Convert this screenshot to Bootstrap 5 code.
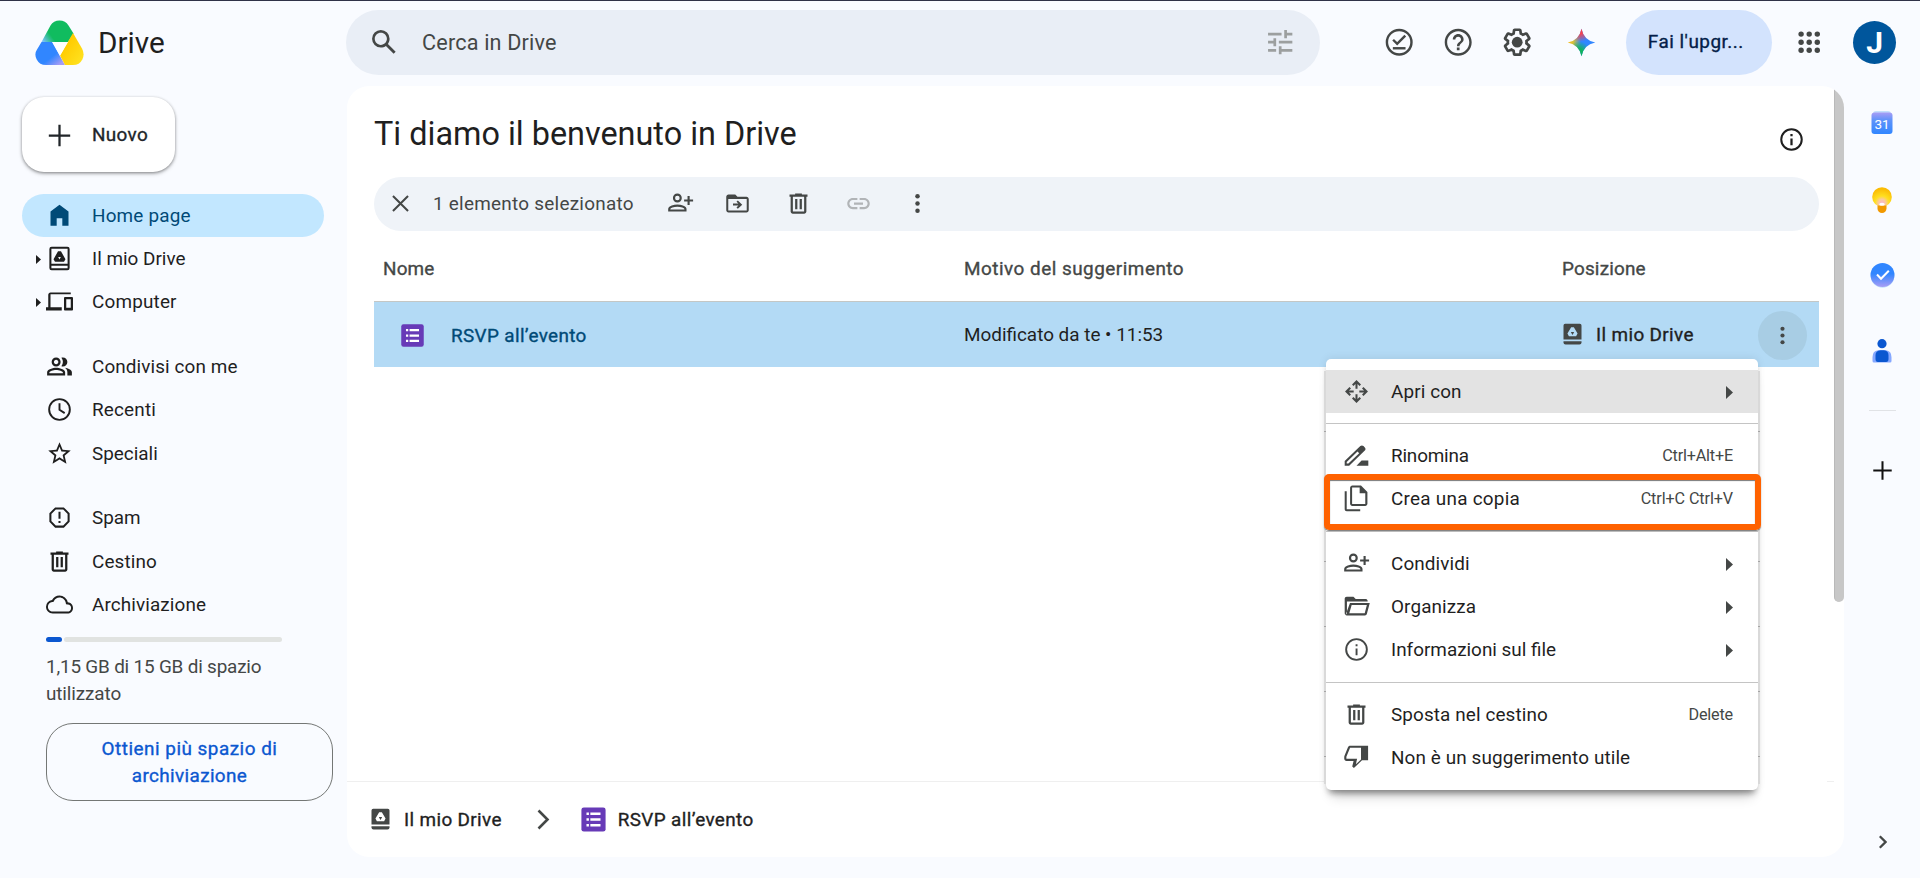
<!DOCTYPE html>
<html lang="it">
<head>
<meta charset="utf-8">
<meta name="viewport" content="width=device-width, initial-scale=1">
<title>Home page - Google Drive</title>
<link href="https://cdn.jsdelivr.net/npm/bootstrap@5.3.0/dist/css/bootstrap.min.css" rel="stylesheet">
<style>
  body { font-family: Roboto, "Liberation Sans", sans-serif; font-size: 18.9px; line-height: 27px; color: #1f1f1f; background: #f9fbff; height: 878px; overflow: hidden; }
  svg { display: block; flex: none; fill: currentColor; }
  .ic { width: 27px; height: 27px; }
  .ic-lg { width: 32.4px; height: 32.4px; }
  .fw-mid { -webkit-text-stroke: .35px currentColor; }
  .tone { color: #444746; }
  .txt { white-space: nowrap; }
  .ls-n2 { letter-spacing: -.18px; } .ls-n1 { letter-spacing: -.11px; }
  .ls-1 { letter-spacing: .11px; } .ls-2 { letter-spacing: .18px; } .ls-3 { letter-spacing: .26px; }
  .ls-4 { letter-spacing: .36px; } .ls-5 { letter-spacing: .5px; }

  .top-bar { height: 86px; border-top: 1px solid #2f3247; padding: 0 24px 2px 0; }
  .brand { width: 346px; padding-left: 35px; gap: 14px; }
  .brand-name { font-size: 29.7px; line-height: 36px; }
  .search-box { width: 975px; height: 65px; background: #e9eef6; padding: 0 23px 0 22px; margin-right: 63px; }
  .search-box .txt { font-size: 21.6px; margin-left: 22px; }
  .search-box .tune { color: #9c9f9f; }
  .top-icons { gap: 27px; }
  .top-icons .spark { margin-left: 4px; }
  .upgrade { width: 146px; height: 65px; background: #d3e3fd; color: #041e49; margin: 0 21px 0 28px; padding: 0 0 0 22px; font-size: 18.9px; }
  .avatar-dot { width: 43px; height: 43px; background: #00569c; color: #fff; font-size: 30px; font-weight: 700; margin-left: 28px; }

  .side { width: 347px; padding: 11px 14px 0 22px; }
  .new-btn { width: 153px; height: 75px; border-radius: 22px; background: #fff; padding: 1px 0 0 24px; gap: 19px; font-size: 18.9px; box-shadow: 0 1px 3px rgba(0,0,0,.35), 0 2px 4px rgba(0,0,0,.18); }
  .side-nav { margin-top: 22px; }
  .side-link { height: 43.2px; width: 302px; padding-left: 24px; gap: 19px; color: #1f1f1f; position: relative; text-decoration: none; }
  .side-link.on { background: #c2e7ff; color: #004a77; }
  .side-link .twist { position: absolute; left: 14px; top: 17.5px; width: 5px; height: 9px; }
  .gap-row { margin-top: 21.6px; }
  .meter { width: 236px; height: 5px; margin: 11px 0 0 24px; gap: 2px; }
  .meter div { border-radius: 3px; background: #e1e3e1; }
  .meter .used { background: #0b57d0; }
  .quota { margin: 11px 0 0 24px; color: #444746; }
  .more-btn { width: 287px; height: 78px; margin: 16px 0 0 24px; border: 1px solid #747775; border-radius: 27px; color: #0b57d0; background: none; }

  .panel { width: 1497px; height: 771px; background: #fff; border-radius: 22px; position: relative; overflow: hidden; padding: 0 25px 0 27px; }
  .page-title { font-size: 32.4px; line-height: 44px; font-weight: 400; height: 91px; padding: 26px 14.5px 0 0; }
  .page-title svg { margin-top: 14px; }
  .tool-pill { height: 54px; background: #eff3f8; padding-left: 13px; padding-bottom: 1px; }
  .tool-pill .txt { margin-left: 19px; width: 234px; padding-bottom: 1px; }
  .t-move { margin-left: 30px; } .t-bin { margin-left: 34px; } .t-link { margin-left: 33px; color: #b1b4b7; } .t-more { margin-left: 32px; }
  .th-row { height: 71px; color: #444746; border-bottom: 1px solid #c4c7c5; padding-top: 5px; }
  .file-row { height: 65px; background: #b3daf5; }
  .c1 { width: 590px; } .c2 { width: 598px; }
  .th-row .c1 { padding-left: 9px; }
  .file-row .c1 { padding: 1px 0 0 25px; color: #004a77; gap: 25px; }
  .place { gap: 10px; margin-left: -3px; }
  .kebab { width: 49px; height: 49px; background: #a8cde4; margin: 2px 12px 0 auto; }
  .scroll-thumb { position: absolute; right: 0; top: 0; width: 10px; height: 516px; background: #c7c7c7; border-left: 1px solid #b9b9b9; border-radius: 0 0 5px 5px; }
  .path-bar { position: absolute; left: 0; right: 0; bottom: 0; height: 76px; padding-left: 20px; }
  .path-line { position: absolute; left: 0; right: 10px; bottom: 75px; height: 1px; background: linear-gradient(90deg, #efefef 0 977px, #fff 977px 1480px, #efefef 1480px); }
  .sep { margin: 0 29px 0 35px; }

  .rail { width: 76px; }
  .rail svg { margin: 0 auto; }
  .rail .r1 { margin-top: 25px; } .rail .r2 { margin-top: 52px; } .rail .r3 { margin-top: 50px; } .rail .r4 { margin-top: 51px; }
  .rail-rule { width: 27px; height: 1px; background: #e1e3e6; margin-top: 47px; }
  .rail .r5 { margin-top: 46px; color: #111; } .rail .r6 { margin-top: 351px; }

  .ctx { position: absolute; left: 1326px; top: 359px; width: 432px; height: 431px; background: #fff; border-radius: 5px; padding: 10.8px 0 0; box-shadow: 0 6px 6px -3px rgba(0,0,0,.38), 0 12px 12px -6px rgba(0,0,0,.2), 0 -1px 8px rgba(0,0,0,.08); }
  .ctx::before, .ctx::after { content: ""; position: absolute; top: 12px; bottom: 6px; width: 2px; background: repeating-linear-gradient(#d9d9d9 0 60px, #a5a5a5 60px 61px, #d9d9d9 61px 65px); }
  .ctx::before { left: -2px; } .ctx::after { right: -2px; }
  .ctx-item { height: 43.2px; padding: 0 25px 2px 17px; gap: 21px; }
  .ctx-item.on { background: #e3e3e3; padding-bottom: 0; }
  .ctx-item small { font-size: 16.2px; color: #444746; margin-left: auto; }
  .ctx-item .arrow { width: 7px; height: 13px; margin: 2px 0 0 auto; }
  .ctx-rule { height: 21.6px; padding-top: 10px; }
  .ctx-rule div { height: 1px; background: #c4c4c4; }
  .marker { position: absolute; left: 1324px; top: 474px; width: 437px; height: 56px; border: 6px solid #ff6200; border-radius: 5px; box-shadow: 0 1px 1px #777, inset 0 1px 1px #777; }
</style>
</head>
<body>
<svg class="d-none">
  <symbol id="drv" viewBox="0 0 24 24"><path fill-rule="evenodd" d="M5 1.500h14a2 2 0 0 1 2 2v17a2 2 0 0 1-2 2H5a2 2 0 0 1-2-2v-17a2 2 0 0 1 2-2zM4.800 3.300v13.400h14.400V3.300zM4.800 18.500v2.200h14.400v-2.200z"/><path fill-rule="evenodd" d="M10.700 5.600h2.600l4 7-1.300 2.300H8l-1.300-2.300zM12 12.900l1.200-2.200h-2.400z"/></symbol>
  <symbol id="drvf" viewBox="0 0 24 24"><path fill-rule="evenodd" d="M5.500 2.500h13a1.500 1.500 0 0 1 1.500 1.500v12.500H4V4a1.500 1.500 0 0 1 1.500-1.500zM10.800 5.500 7.500 11.200l1.300 2.300h6.400l1.300-2.300-3.300-5.700zM12 12.400l-1.500-2.600h3z"/><path d="M4 18h16v1a1.800 1.800 0 0 1-1.800 1.800H5.800A1.800 1.800 0 0 1 4 19z"/></symbol>
  <symbol id="forms" viewBox="0 0 24 24"><rect x="2" y="2" width="20" height="20" rx="2" fill="#673ab7"/><path fill="#fff" d="M6.200 6.300h2v2h-2zM9.400 6.300h8.400v2H9.400zM6.200 11h2v2h-2zM9.400 11h8.400v2H9.400zM6.200 15.700h2v2h-2zM9.400 15.700h8.400v2H9.400z"/></symbol>
  <symbol id="trash" viewBox="0 0 24 24"><path d="M15 4V3H9v1H4v2h1v13c0 1.100.9 2 2 2h10c1.100 0 2-.9 2-2V6h1V4h-5zm2 15H7V6h10v13zM9 8h2v9H9zm4 0h2v9h-2z"/></symbol>
  <symbol id="padd" viewBox="0 0 24 24"><g fill="none" stroke="currentColor" stroke-width="1.900"><circle cx="9.200" cy="7.100" r="3"/><path d="M2 18.200v-1.400c0-1.900 4.300-2.900 7.200-2.900s7.200 1 7.200 2.900v1.400zM19.200 5.300v8M15.200 9.300h8"/></g></symbol>
  <symbol id="info" viewBox="0 0 24 24"><circle cx="12" cy="12" r="9.100" fill="none" stroke="currentColor" stroke-width="1.800"/><path d="M11 11h2v6h-2zM11 7.200h2v2h-2z"/></symbol>
  <symbol id="tri" viewBox="0 0 5 9" preserveAspectRatio="none"><path d="M0 0l5 4.500L0 9z"/></symbol>
  <symbol id="dots" viewBox="0 0 24 24"><circle cx="12" cy="5.500" r="2"/><circle cx="12" cy="12" r="2"/><circle cx="12" cy="18.500" r="2"/></symbol>
</svg>

<header class="top-bar d-flex align-items-center">
  <div class="brand d-flex align-items-center">
    <svg width="49" height="45" viewBox="0 0 49 45">
      <defs>
        <linearGradient id="lb" x1="0" y1="0" x2="1" y2="1"><stop offset=".6" stop-color="#3186ff"/><stop offset=".9" stop-color="#a79cf5"/></linearGradient>
        <linearGradient id="lg" x1="0" y1=".9" x2="1" y2=".4"><stop offset="0" stop-color="#7cc0ff"/><stop offset=".32" stop-color="#10bc5f"/></linearGradient>
        <linearGradient id="ly" x1="0" y1="0" x2="1" y2="1"><stop offset=".3" stop-color="#ffcb00"/><stop offset=".9" stop-color="#ffe11f"/></linearGradient>
      </defs>
      <path fill="url(#lg)" d="M6.500 22 15.500 5.500Q18.500.5 24.500.5t9 5L38.500 13.500 33 22z"/>
      <path fill="url(#lb)" d="M6.500 22H17l13 23H11Q4.500 45 1.700 39.500T2 29.500z"/>
      <path fill="url(#ly)" d="M38 13l9 15.500q3 5.500.3 11T38 45H30l-5-9.500z"/>
      <path fill="#fff" d="M17.500 22H33l-8 13.800z"/>
    </svg>
    <span class="brand-name txt">Drive</span>
  </div>
  <div class="search-box rounded-pill d-flex align-items-center tone">
    <svg class="ic-lg" viewBox="0 0 24 24"><path d="M20.490 19l-5.730-5.730C15.530 12.200 16 10.910 16 9.500A6.500 6.500 0 1 0 9.500 16c1.410 0 2.700-.47 3.770-1.240L19 20.490 20.490 19zM5 9.500C5 7.010 7.010 5 9.500 5S14 7.010 14 9.500 11.990 14 9.500 14 5 11.990 5 9.500z"/></svg>
    <span class="txt ls-2">Cerca in Drive</span>
    <svg class="ic-lg ms-auto tune" viewBox="0 0 24 24"><path d="M3 17v2h6v-2H3zM3 5v2h10V5H3zm10 16v-2h8v-2h-8v-2h-2v6h2zM7 9v2H3v2h4v2h2V9H7zm14 4v-2H11v2h10zm-6-4h2V7h4V5h-4V3h-2v6z"/></svg>
  </div>
  <div class="top-icons d-flex align-items-center tone">
    <svg class="ic-lg" viewBox="0 0 24 24"><g fill="none" stroke="currentColor" stroke-width="1.800"><circle cx="12" cy="12" r="9.100"/><path d="M7.500 10.200l3 3 6-6"/><path d="M7.300 16.500h9.400"/></g></svg>
    <svg class="ic-lg" viewBox="0 0 24 24"><path d="M11 18h2v-2h-2v2zm1-16C6.480 2 2 6.480 2 12s4.480 10 10 10 10-4.480 10-10S17.520 2 12 2zm0 18.200c-4.500 0-8.200-3.700-8.200-8.200S7.500 3.800 12 3.800s8.200 3.700 8.200 8.200-3.700 8.200-8.200 8.200zM12 6c-2.210 0-4 1.790-4 4h1.900c0-1.200.9-2.100 2.100-2.100s2.100.9 2.100 2.100c0 2-3 1.750-3 5H13c0-2.250 3-2.500 3-5 0-2.210-1.790-4-4-4z"/></svg>
    <svg class="ic-lg" viewBox="0 0 24 24"><path d="M13.850 22.250h-3.700c-.74 0-1.360-.54-1.450-1.270l-.27-1.890c-.27-.14-.53-.29-.79-.46l-1.800.72c-.7.26-1.470-.03-1.810-.65L2.200 15.530c-.35-.66-.2-1.440.36-1.880l1.530-1.190c-.01-.15-.02-.3-.02-.46 0-.15.01-.31.02-.46l-1.520-1.190c-.59-.45-.74-1.260-.37-1.880l1.850-3.190c.34-.62 1.110-.9 1.790-.63l1.810.73c.26-.17.52-.32.78-.46l.27-1.910c.09-.7.71-1.250 1.440-1.250h3.700c.74 0 1.360.54 1.450 1.270l.27 1.890c.27.14.53.29.79.46l1.800-.72c.71-.26 1.480.03 1.820.65l1.840 3.180c.36.66.2 1.440-.36 1.880l-1.520 1.190c.01.15.02.3.02.46s-.01.31-.02.46l1.520 1.190c.56.45.72 1.230.37 1.860l-1.860 3.220c-.34.62-1.110.9-1.800.63l-1.800-.72c-.26.17-.52.32-.78.46l-.27 1.910c-.1.68-.72 1.220-1.460 1.220zm-3.230-2h2.760l.37-2.550.53-.22c.44-.18.88-.44 1.340-.78l.45-.34 2.380.96 1.380-2.400-2.030-1.580.07-.56c.03-.26.06-.51.06-.78s-.03-.53-.06-.78l-.07-.56 2.030-1.580-1.390-2.400-2.390.96-.45-.35c-.42-.32-.87-.58-1.330-.77l-.52-.22-.37-2.550h-2.760l-.37 2.550-.53.21c-.44.19-.88.44-1.340.79l-.45.33-2.380-.95-1.390 2.390 2.030 1.580-.07.56a7 7 0 0 0-.06.79c0 .26.02.53.06.78l.07.56-2.030 1.580 1.380 2.400 2.390-.96.45.35c.43.33.86.58 1.330.77l.53.22.38 2.550z"/><circle cx="12" cy="12" r="4"/></svg>
    <svg class="spark" width="33" height="33" viewBox="0 0 24 24">
      <defs><linearGradient id="ga" x1="0" x2="1"><stop offset="0" stop-color="#f9bc15"/><stop offset=".2" stop-color="#d8c13a"/><stop offset=".48" stop-color="#3186ff"/></linearGradient>
      <radialGradient id="gr" gradientUnits="userSpaceOnUse" cx="11" cy="3" r="8.500"><stop offset=".3" stop-color="#f8434f"/><stop offset="1" stop-color="#f8434f" stop-opacity="0"/></radialGradient>
      <radialGradient id="gg" gradientUnits="userSpaceOnUse" cx="10" cy="19.500" r="8.500"><stop offset=".35" stop-color="#12b35f"/><stop offset="1" stop-color="#12b35f" stop-opacity="0"/></radialGradient></defs>
      <path fill="url(#ga)" d="M12 2Q13.600 10.400 22 12 13.600 13.600 12 22 10.400 13.600 2 12 10.400 10.400 12 2z"/><path fill="url(#gr)" d="M12 2Q13.600 10.400 22 12 13.600 13.600 12 22 10.400 13.600 2 12 10.400 10.400 12 2z"/><path fill="url(#gg)" d="M12 2Q13.600 10.400 22 12 13.600 13.600 12 22 10.400 13.600 2 12 10.400 10.400 12 2z"/>
    </svg>
  </div>
  <button class="upgrade btn border-0 rounded-pill text-start"><span class="txt fw-mid ls-5">Fai l'upgr...</span></button>
  <svg class="ic-lg tone" viewBox="0 0 24 24"><g><circle cx="6" cy="6" r="2"/><circle cx="12" cy="6" r="2"/><circle cx="18" cy="6" r="2"/><circle cx="6" cy="12" r="2"/><circle cx="12" cy="12" r="2"/><circle cx="18" cy="12" r="2"/><circle cx="6" cy="18" r="2"/><circle cx="12" cy="18" r="2"/><circle cx="18" cy="18" r="2"/></g></svg>
  <div class="avatar-dot rounded-circle d-flex align-items-center justify-content-center">J</div>
</header>

<div class="d-flex">
  <aside class="side">
    <button class="new-btn btn border-0 d-flex align-items-center">
      <svg class="ic" viewBox="0 0 24 24"><path d="M11 2.500h2V11h8.500v2H13v8.500h-2V13H2.500v-2H11z"/></svg>
      <span class="txt fw-mid ls-4">Nuovo</span>
    </button>
    <nav class="side-nav nav flex-column">
      <a class="side-link on rounded-pill d-flex align-items-center"><svg class="ic" viewBox="0 0 24 24"><path d="M4 21V8.500L12 2.500l8 6V21h-5.500v-6.500h-5V21z"/></svg><span class="txt ls-2">Home page</span></a>
      <a class="side-link d-flex align-items-center"><svg class="twist"><use href="#tri"/></svg><svg class="ic"><use href="#drv"/></svg><span class="txt">Il mio Drive</span></a>
      <a class="side-link d-flex align-items-center"><svg class="twist"><use href="#tri"/></svg><svg class="ic" viewBox="0 0 24 24"><path d="M4 5.500h18V4H4c-1.100 0-2 .9-2 2v11H0v3h14v-3H4V5.500zM23 8h-6c-.55 0-1 .45-1 1v10c0 .55.45 1 1 1h6c.55 0 1-.45 1-1V9c0-.55-.45-1-1-1zm-1 9.500h-4V10h4v7.500z"/></svg><span class="txt ls-2">Computer</span></a>
      <a class="side-link gap-row d-flex align-items-center"><svg class="ic" viewBox="0 0 24 24"><path d="M15 8c0-1.420-.5-2.730-1.330-3.760.42-.14.86-.24 1.330-.24 2.210 0 4 1.790 4 4s-1.790 4-4 4c-.43 0-.84-.09-1.230-.21l-.1-.03A5.980 5.980 0 0 0 15 8zm1.660 5.130C18.030 14.060 19 15.320 19 17v3h4v-3c0-2.180-3.580-3.470-6.340-3.870zM9 6c-1.100 0-2 .9-2 2s.9 2 2 2 2-.9 2-2-.9-2-2-2m0 9c-2.700 0-5.800 1.290-6 2.010V18h12v-1c-.2-.71-3.300-2-6-2M9 4c2.210 0 4 1.790 4 4s-1.790 4-4 4-4-1.790-4-4 1.790-4 4-4zm0 9c2.670 0 8 1.340 8 4v3H1v-3c0-2.660 5.330-4 8-4z"/></svg><span class="txt ls-1">Condivisi con me</span></a>
      <a class="side-link d-flex align-items-center"><svg class="ic" viewBox="0 0 24 24"><g fill="none" stroke="currentColor" stroke-width="1.700"><circle cx="12" cy="12" r="9.200"/><path d="M12 6.500V12.300l4.600 2.900"/></g></svg><span class="txt ls-2">Recenti</span></a>
      <a class="side-link d-flex align-items-center"><svg class="ic" viewBox="0 0 24 24"><path d="M22 9.240l-7.190-.62L12 2 9.190 8.630 2 9.240l5.460 4.730L5.820 21 12 17.270 18.180 21l-1.630-7.030L22 9.240zM12 15.400l-3.760 2.270 1-4.280-3.320-2.880 4.380-.38L12 6.100l1.710 4.040 4.380.38-3.320 2.880 1 4.280L12 15.400z"/></svg><span class="txt">Speciali</span></a>
      <a class="side-link gap-row d-flex align-items-center"><svg class="ic" viewBox="0 0 24 24"><path fill="none" stroke="currentColor" stroke-width="1.800" d="M8.500 3.900h7l4.600 4.600v7l-4.600 4.600h-7L3.900 15.500v-7z"/><path d="M11.100 6.800h1.800v6.400h-1.800zM11.100 15h1.800v1.800h-1.800z"/></svg><span class="txt">Spam</span></a>
      <a class="side-link d-flex align-items-center"><svg class="ic"><use href="#trash"/></svg><span class="txt ls-1">Cestino</span></a>
      <a class="side-link d-flex align-items-center"><svg class="ic" viewBox="0 0 24 24"><path d="M19.350 10.040A7.490 7.490 0 0 0 12 4C9.110 4 6.600 5.640 5.350 8.040A5.994 5.994 0 0 0 0 14c0 3.310 2.690 6 6 6h13c2.760 0 5-2.240 5-5 0-2.640-2.050-4.780-4.650-4.960zM19 18.300H6c-2.350 0-4.300-1.900-4.300-4.300 0-2.150 1.700-4 3.860-4.200l1-.1.500-.9A5.500 5.500 0 0 1 12 5.700c2.700 0 5 1.900 5.500 4.600l.3 1.500 1.500.1A3.200 3.200 0 0 1 22.300 15c0 1.850-1.450 3.300-3.300 3.300z"/></svg><span class="txt ls-1">Archiviazione</span></a>
    </nav>
    <div class="meter d-flex"><div class="used" style="width:16px"></div><div class="flex-grow-1"></div></div>
    <div class="quota"><span class="txt ls-n2">1,15 GB di 15 GB di spazio</span><br><span class="txt ls-n1">utilizzato</span></div>
    <button class="more-btn d-block"><span class="txt fw-mid ls-5">Ottieni più spazio di</span><br><span class="txt fw-mid ls-4">archiviazione</span></button>
  </aside>

  <main class="panel">
    <h1 class="page-title m-0 d-flex justify-content-between"><span class="txt">Ti diamo il benvenuto in Drive</span><svg class="ic"><use href="#info"/></svg></h1>
    <div class="tool-pill rounded-pill d-flex align-items-center tone">
      <svg class="ic" viewBox="0 0 24 24"><path fill="none" stroke="currentColor" stroke-width="1.800" d="M5.300 5.300l13.400 13.400M18.700 5.300L5.300 18.700"/></svg>
      <span class="txt ls-3">1 elemento selezionato</span>
      <svg class="ic"><use href="#padd"/></svg>
      <svg class="ic t-move" viewBox="0 0 24 24"><path fill-rule="evenodd" d="M20 6h-8l-2-2H4c-1.100 0-2 .9-2 2v12c0 1.100.9 2 2 2h16c1.100 0 2-.9 2-2V8c0-1.100-.9-2-2-2zm.2 12.200H3.800V8h16.400v10.200z"/><path d="M12.300 9.300 16.200 13l-3.900 3.700-1.200-1.200 1.700-1.700H8v-1.700h4.800l-1.700-1.600z"/></svg>
      <svg class="ic t-bin"><use href="#trash"/></svg>
      <svg class="ic t-link" viewBox="0 0 24 24"><path d="M3.900 12c0-1.710 1.390-3.100 3.100-3.100h4V7H7c-2.760 0-5 2.240-5 5s2.240 5 5 5h4v-1.900H7c-1.710 0-3.100-1.390-3.100-3.100zM8 13h8v-2H8v2zm9-6h-4v1.900h4c1.710 0 3.100 1.390 3.100 3.100s-1.390 3.100-3.100 3.100h-4V17h4c2.760 0 5-2.240 5-5s-2.240-5-5-5z"/></svg>
      <svg class="ic t-more"><use href="#dots"/></svg>
    </div>
    <div class="th-row d-flex align-items-center fw-mid">
      <div class="c1"><span class="txt ls-2">Nome</span></div><div class="c2"><span class="txt ls-5">Motivo del suggerimento</span></div><div><span class="txt ls-2">Posizione</span></div>
    </div>
    <div class="file-row d-flex align-items-center">
      <div class="c1 d-flex align-items-center"><svg class="ic"><use href="#forms"/></svg><span class="txt fw-mid ls-4">RSVP all’evento</span></div>
      <div class="c2"><span class="txt">Modificato da te • 11:53</span></div>
      <div class="place d-flex align-items-center"><svg class="ic tone"><use href="#drvf"/></svg><span class="txt fw-mid ls-4">Il mio Drive</span></div>
      <div class="kebab rounded-circle d-flex align-items-center justify-content-center tone"><svg width="25" height="25"><use href="#dots"/></svg></div>
    </div>
    <div class="scroll-thumb"></div>
    <div class="path-line"></div>
    <div class="path-bar d-flex align-items-center">
      <div class="place d-flex align-items-center ms-0"><svg class="ic tone"><use href="#drvf"/></svg><span class="txt fw-mid ls-4">Il mio Drive</span></div>
      <svg class="tone sep" width="13" height="21" viewBox="0 0 13 21"><path fill="none" stroke="currentColor" stroke-width="2.600" d="M1.500 1.500l9 9-9 9"/></svg>
      <div class="place d-flex align-items-center ms-0"><svg width="29" height="29"><use href="#forms"/></svg><span class="txt fw-mid ls-4">RSVP all’evento</span></div>
    </div>
  </main>

  <aside class="rail">
    <svg class="r1" width="22" height="24" viewBox="0 0 22 24"><defs><linearGradient id="cal" x2="0" y2="1"><stop offset="0" stop-color="#a99df5"/><stop offset=".35" stop-color="#5f93fa"/><stop offset="1" stop-color="#3186ff"/></linearGradient></defs><rect x="2" y="0" width="18" height="6" rx="3" fill="#c3e0fb"/><rect x=".5" y="1.500" width="21" height="21.500" rx="3" fill="url(#cal)"/><text x="11" y="17.500" font-size="13.500" fill="#fff" text-anchor="middle">31</text></svg>
    <svg class="r2" width="20" height="26" viewBox="0 0 20 26"><defs><radialGradient id="kp" gradientUnits="userSpaceOnUse" cx="10" cy="16" r="14"><stop offset="0" stop-color="#fbb6cf"/><stop offset=".25" stop-color="#fbc9a0"/><stop offset=".5" stop-color="#ffdf20"/><stop offset="1" stop-color="#fbbc04"/></radialGradient></defs><circle cx="10" cy="10" r="9.800" fill="url(#kp)"/><path fill="#f29900" d="M5.500 18.500h9v3a4.500 4.500 0 0 1-9 0z"/><ellipse cx="10" cy="17.300" rx="2.800" ry="1.500" fill="#fff"/></svg>
    <svg class="r3" width="25" height="25" viewBox="0 0 25 25"><defs><linearGradient id="tk" x2="0" y2="1"><stop offset=".45" stop-color="#3186ff"/><stop offset="1" stop-color="#a99df5"/></linearGradient></defs><circle cx="12.500" cy="13" r="11.800" fill="#bfe3fb"/><circle cx="12.500" cy="12" r="12" fill="url(#tk)"/><path fill="none" stroke="#fff" stroke-width="2" d="M7 11.500l4 4.200 7.800-8"/></svg>
    <svg class="r4" width="20" height="24" viewBox="0 0 20 24"><circle cx="10" cy="4.700" r="4.600" fill="#0b57d0"/><path fill="#86a8ff" d="M6 11.300h8q5.500.5 5.500 7V22q0 1.500-1.500 1.500H2Q.5 23.500.5 22v-3.700q0-6.500 5.500-7z"/><path fill="#0b57d0" d="M8.500 11.300h3.500q4.500.5 4.500 5V20q0 3-2.500 3H6q-2.500 0-2.500-3v-3.700q0-4.500 5-5z"/></svg>
    <div class="rail-rule mx-auto"></div>
    <svg class="ic r5" viewBox="0 0 24 24"><path d="M11.100 3.800h1.800v7.300h7.300v1.800h-7.300v7.300h-1.800v-7.300H3.800v-1.800h7.300z"/></svg>
    <svg class="tone r6" width="9" height="14" viewBox="0 0 9 14"><path fill="none" stroke="currentColor" stroke-width="2.300" d="M1.800 1.300L7.500 7l-5.700 5.700"/></svg>
  </aside>
</div>

<div class="ctx">
  <div class="ctx-item on d-flex align-items-center"><svg class="ic tone" viewBox="0 0 24 24"><path d="M12 1.800l4 4-1.300 1.300-1.800-1.800V9.500h-1.800V5.300L9.300 7.100 8 5.800zM12 22.200l4-4-1.300-1.300-1.800 1.800v-4.200h-1.800v4.200l-1.800-1.800L8 18.200zM1.800 12l4-4 1.300 1.300-1.800 1.800h4.200v1.800H5.300l1.800 1.800L5.800 16zM22.200 12l-4-4-1.300 1.300 1.800 1.800h-4.200v1.800h4.200l-1.800 1.800 1.300 1.300z"/></svg><span class="txt ls-1">Apri con</span><svg class="arrow tone"><use href="#tri"/></svg></div>
  <div class="ctx-rule"><div></div></div>
  <div class="ctx-item d-flex align-items-center"><svg class="ic tone" viewBox="0 0 24 24"><path fill-rule="evenodd" d="M19.400 4.800l-1.200-1.200c-.8-.8-2-.8-2.800 0L1.500 16.900V21h4L19.400 7.600c.8-.8.800-2 0-2.800zM4.800 19.200H3.300v-1.500l9.600-9.300 1.500 1.500zM12 21l4.500-4.500h6V21z"/></svg><span class="txt ls-n2">Rinomina</span><small class="txt ls-n2">Ctrl+Alt+E</small></div>
  <div class="ctx-item d-flex align-items-center"><svg class="ic tone" viewBox="0 0 24 24"><path fill-rule="evenodd" d="M16 .5H8.300c-1.100 0-2 .9-2 2v14.200c0 1.100.9 2 2 2h11.400c1.100 0 2-.9 2-2V6.200zM8.100 2.300h6.700v5h5v9.600H8.100zM1.500 5.500h1.800v16h12v1.800h-12c-1 0-1.800-.8-1.800-1.800z"/></svg><span class="txt ls-3">Crea una copia</span><small class="txt ls-n1">Ctrl+C Ctrl+V</small></div>
  <div class="ctx-rule"><div></div></div>
  <div class="ctx-item d-flex align-items-center"><svg class="ic tone"><use href="#padd"/></svg><span class="txt ls-1">Condividi</span><svg class="arrow tone"><use href="#tri"/></svg></div>
  <div class="ctx-item d-flex align-items-center"><svg class="ic tone" viewBox="0 0 24 24"><path fill-rule="evenodd" d="M1.500 5.200c0-1 .8-1.800 1.800-1.800h6l2 2H20c.9 0 1.700.6 1.900 1.500v.6H3.500V18l-1.200 1.500c-.5-.3-.8-.8-.8-1.500zM6.200 8.800h17.600L21.200 18.600c-.2.800-.9 1.300-1.700 1.300H3.300c-.5 0-.8-.2-1-.4zM7.700 10.700 5.600 18h13.700l1.900-7.300z"/></svg><span class="txt ls-1">Organizza</span><svg class="arrow tone"><use href="#tri"/></svg></div>
  <div class="ctx-item d-flex align-items-center"><svg class="ic tone" viewBox="0 0 24 24"><circle cx="12" cy="12" r="9.200" fill="none" stroke="currentColor" stroke-width="1.700"/><path d="M11.200 11h1.700v6h-1.700zM11.200 7.300h1.700V9h-1.700z"/></svg><span class="txt">Informazioni sul file</span><svg class="arrow tone"><use href="#tri"/></svg></div>
  <div class="ctx-rule"><div></div></div>
  <div class="ctx-item d-flex align-items-center"><svg class="ic tone"><use href="#trash"/></svg><span class="txt ls-1">Sposta nel cestino</span><small class="txt ls-n2">Delete</small></div>
  <div class="ctx-item d-flex align-items-center"><svg class="ic tone" viewBox="0 0 24 24"><path fill-rule="evenodd" d="M22.300 1.500H6.300c-.8 0-1.500.5-1.800 1.200l-3 7.200c-.3.600-.4 1.100-.4 1.700v1.400c0 1.100.9 2 2 2h6.300l-1.200 5.100 1.500 1.200 7.200-6.800h5.400zM16 13.700l-4.500 4.300 1-4.800H3v-1.800l3.300-8H16z"/></svg><span class="txt ls-1">Non è un suggerimento utile</span></div>
</div>
<div class="marker"></div>
<script src="https://cdn.jsdelivr.net/npm/bootstrap@5.3.0/dist/js/bootstrap.bundle.min.js"></script>
</body>
</html>
